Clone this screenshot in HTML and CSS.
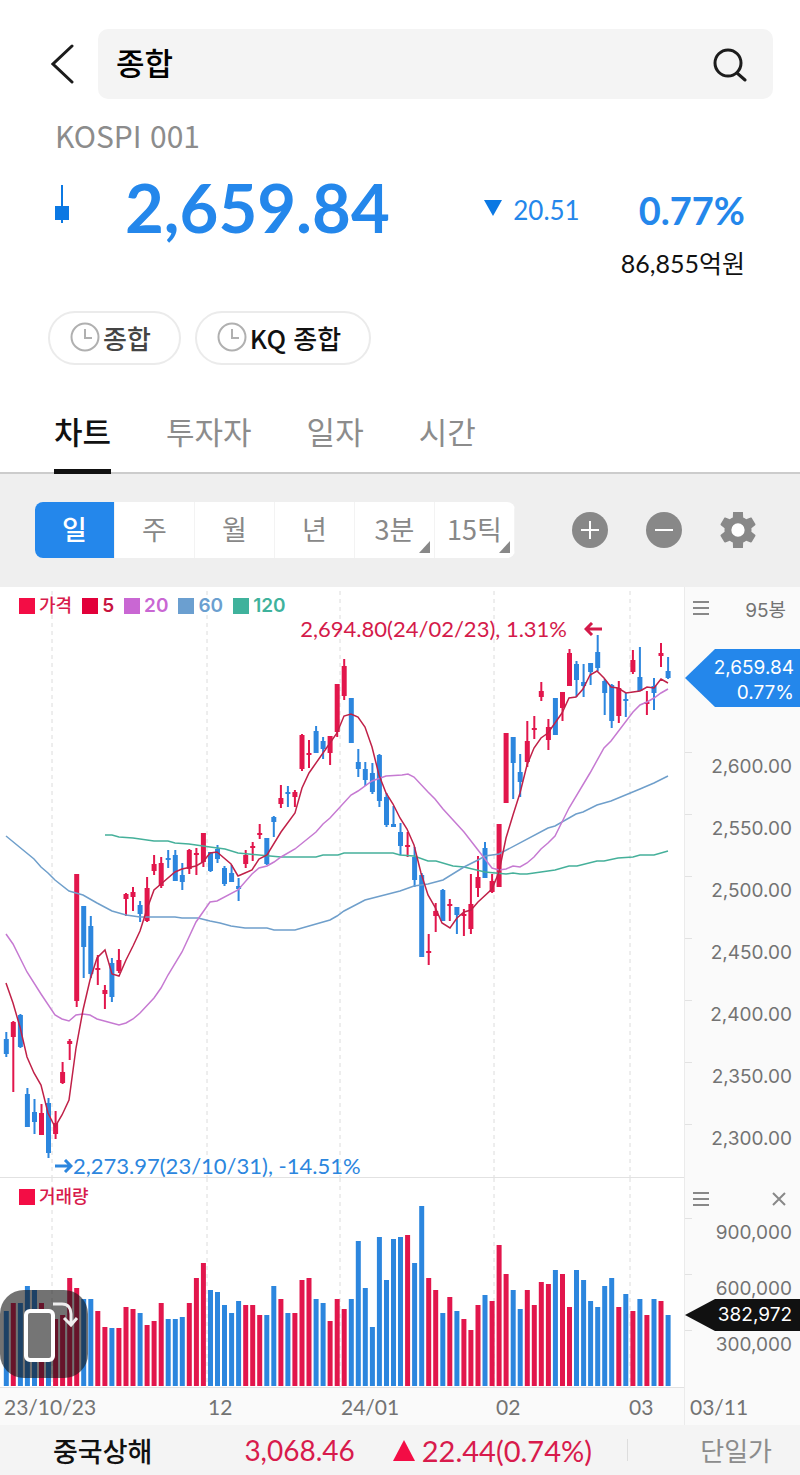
FILE: index.html
```html
<!DOCTYPE html>
<html lang="ko">
<head>
    <meta charset="UTF-8">
    <meta name="viewport" content="width=device-width, initial-scale=1.0">
    <title>종합 - KOSPI 001</title>
    <link rel="stylesheet" href="styles.css">
</head>
<body>
    <header class="top-bar">
        <button class="back" aria-label="뒤로">
            <svg width="24" height="40" viewBox="0 0 24 40"><path d="M21 2 2 20l19 18"/></svg>
        </button>
        <div class="search-box">
            <input type="text" value="종합" aria-label="종목 검색">
            <button class="search" aria-label="검색">
                <svg width="36" height="36" viewBox="0 0 36 36"><circle cx="17" cy="17" r="13"/><path d="m26 27 8 7"/></svg>
            </button>
        </div>
    </header>

    <section class="quote">
        <h1>KOSPI 001</h1>
        <div class="quote-row">
            <svg class="mini-candle" width="14" height="38" viewBox="0 0 14 38"><path d="M6 0h2v38H6zM0 21h14v14H0z"/></svg>
            <strong class="price">2,659.84</strong>
            <span class="change"><svg width="18" height="16" viewBox="0 0 18 16"><path d="M0 0h18L9 16z"/></svg>20.51</span>
            <strong class="rate">0.77%</strong>
        </div>
        <p class="amount">86,855억원</p>
    </section>

    <div class="chips">
        <button class="chip muted"><svg width="30" height="30" viewBox="0 0 30 30"><circle cx="15" cy="15" r="13.5"/><path d="M15 7v9h7"/></svg>종합</button>
        <button class="chip"><svg width="30" height="30" viewBox="0 0 30 30"><circle cx="15" cy="15" r="13.5"/><path d="M15 7v9h7"/></svg>KQ 종합</button>
    </div>

    <nav class="tabs">
        <a href="#chart" class="active">차트</a>
        <a href="#investor">투자자</a>
        <a href="#daily">일자</a>
        <a href="#time">시간</a>
    </nav>

    <div class="toolbar">
        <div class="periods">
            <button class="active">일</button>
            <button>주</button>
            <button>월</button>
            <button>년</button>
            <button class="more">3분</button>
            <button class="more">15틱</button>
        </div>
        <div class="tools">
            <button aria-label="확대"><svg width="36" height="36" viewBox="0 0 36 36"><circle cx="18" cy="18" r="18"/><path class="sign" d="M9 18h18M18 9v18"/></svg></button>
            <button aria-label="축소"><svg width="36" height="36" viewBox="0 0 36 36"><circle cx="18" cy="18" r="18"/><path class="sign" d="M9 18h18"/></svg></button>
            <button aria-label="설정"><svg width="36" height="36" viewBox="2 2 20 20"><circle class="hole" cx="12" cy="12" r="5"/><path d="M19.43 12.98c.04-.32.07-.64.07-.98s-.03-.66-.07-.98l2.11-1.65c.19-.15.24-.42.12-.64l-2-3.46c-.12-.22-.39-.3-.61-.22l-2.49 1c-.52-.4-1.08-.73-1.69-.98L14.75 2h-5.5l-.12 3.07c-.61.25-1.17.59-1.69.98l-2.49-1c-.23-.09-.49 0-.61.22l-2 3.46c-.13.22-.07.49.12.64l2.11 1.65c-.04.32-.07.65-.07.98s.03.66.07.98l-2.11 1.65c-.19.15-.24.42-.12.64l2 3.46c.12.22.39.3.61.22l2.49-1c.52.4 1.08.73 1.69.98L9.25 22h5.5l.12-3.07c.61-.25 1.17-.59 1.69-.98l2.49 1c.23.09.49 0 .61-.22l2-3.46c.12-.22.07-.49-.12-.64l-2.11-1.65zM12 15.7a3.7 3.7 0 1 1 0-7.4 3.7 3.7 0 0 1 0 7.4z"/></svg></button>
        </div>
    </div>

    <main class="chart" id="chart">
        <div class="pane price-pane">
            <svg id="price-plot" class="plot" viewBox="0 587 684 590" preserveAspectRatio="none"></svg>
            <ul class="legend">
                <li class="c-price">가격</li>
                <li class="c-ma5">5</li>
                <li class="c-ma20">20</li>
                <li class="c-ma60">60</li>
                <li class="c-ma120">120</li>
            </ul>
            <p class="mark high">2,694.80(24/02/23), 1.31%<svg width="18" height="14" viewBox="0 0 18 14"><path d="M18 7H2M8 1 2 7l6 6"/></svg></p>
            <p class="mark low"><svg width="18" height="14" viewBox="0 0 18 14"><path d="M0 7h16M10 1l6 6-6 6"/></svg>2,273.97(23/10/31), -14.51%</p>
        </div>
        <div class="axis price-axis">
            <div class="axis-head">
                <button aria-label="메뉴"><svg width="16" height="14" viewBox="0 0 16 14"><path d="M0 1h16M0 7h16M0 13h16"/></svg></button>
                <span>95봉</span>
            </div>
            <div class="tag now">2,659.84<br>0.77%</div>
            <ol>
                <li>2,600.00</li>
                <li>2,550.00</li>
                <li>2,500.00</li>
                <li>2,450.00</li>
                <li>2,400.00</li>
                <li>2,350.00</li>
                <li>2,300.00</li>
            </ol>
        </div>

        <div class="pane volume-pane">
            <svg id="volume-plot" class="plot" viewBox="0 1178 684 209" preserveAspectRatio="none"></svg>
            <ul class="legend">
                <li class="c-price">거래량</li>
            </ul>
            <button class="rotate" aria-label="가로 화면">
                <svg width="88" height="88" viewBox="0 0 88 88"><rect class="body" x="26" y="21" width="27" height="49" rx="4"/><path d="M53 14h9c6 0 9 4 9 10v9M64 28l7 7 6-7"/></svg>
            </button>
        </div>
        <div class="axis volume-axis">
            <div class="axis-head">
                <button aria-label="메뉴"><svg width="16" height="14" viewBox="0 0 16 14"><path d="M0 1h16M0 7h16M0 13h16"/></svg></button>
                <button aria-label="닫기"><svg width="14" height="14" viewBox="0 0 14 14"><path d="m1 1 12 12M13 1 1 13"/></svg></button>
            </div>
            <ol>
                <li>900,000</li>
                <li>600,000</li>
                <li>300,000</li>
            </ol>
            <div class="tag volume">382,972</div>
        </div>

        <div class="dates">
            <span>23/10/23</span>
            <span>12</span>
            <span>24/01</span>
            <span>02</span>
            <span>03</span>
        </div>
        <div class="axis last-date">03/11</div>
    </main>

    <footer class="ticker">
        <span class="name">중국상해</span>
        <span class="value">3,068.46</span>
        <span class="diff"><svg width="22" height="21" viewBox="0 0 22 21"><path d="M11 0 22 21H0z"/></svg>22.44(0.74%)</span>
        <button class="single">단일가</button>
    </footer>

    <script src="chart.js"></script>
</body>
</html>
```
FILE: styles.css
```css
* { box-sizing: border-box; }
body {
    margin: 0;
    background: #fff;
    color: #111;
    font-family: Lato, "Noto Sans CJK KR", sans-serif;
}
h1, p, ul, ol { margin: 0; padding: 0; }
ul, ol { list-style: none; }
button {
    border: none;
    padding: 0;
    background: none;
    font: inherit;
    color: inherit;
    cursor: pointer;
}
svg { display: block; }

/* header */
.top-bar {
    display: flex;
    align-items: center;
    gap: 23px;
    padding: 29px 27px 0 51px;
}
.back svg, .search svg { fill: none; stroke: #1c1c1c; stroke-width: 3; stroke-linecap: round; }
.search-box {
    flex: 1;
    display: flex;
    align-items: center;
    height: 70px;
    padding: 0 26px 0 18px;
    border-radius: 10px;
    background: #f4f4f4;
}
.search-box input {
    flex: 1;
    min-width: 0;
    border: none;
    padding: 0 0 6px;
    outline: none;
    background: none;
    color: #000;
    font: 500 31px "Noto Sans CJK KR", sans-serif;
}

/* quote */
.quote { padding: 14px 55px 0; }
.quote h1 {
    color: #8c8c8c;
    font: 400 30px/44px "Noto Sans CJK KR", sans-serif;
}
.quote-row {
    display: flex;
    align-items: center;
    height: 84px;
    margin-top: 8px;
    color: #2487eb;
}
.mini-candle { margin-bottom: 6px; fill: #0b78e3; }
.price { margin-left: 56px; font-size: 67px; line-height: 80px; }
.change, .rate { padding-top: 6px; }
.change { display: flex; align-items: center; gap: 11px; margin-left: auto; font-size: 26px; }
.change svg { margin-bottom: 4px; fill: #0b78e3; }
.rate { margin-left: 59px; font-size: 38px; }
.amount { font-size: 25px; line-height: 28px; text-align: right; }

/* recent chips */
.chips { display: flex; gap: 14px; padding: 34px 48px 0; }
.chip {
    display: flex;
    align-items: center;
    gap: 3px;
    height: 54px;
    padding: 0 28px 2px 20px;
    border: 2px solid #ebebeb;
    border-radius: 27px;
    font: 500 26px "Noto Sans CJK KR", sans-serif;
}
.chip.muted { color: #444; }
.chip svg { fill: none; stroke: #b0b0b0; stroke-width: 2; }

/* tabs */
.tabs {
    display: flex;
    gap: 55px;
    height: 109px;
    padding: 0 54px;
    border-bottom: 2px solid #ccc;
}
.tabs a {
    height: 109px;
    padding-top: 43px;
    color: #8c8c8c;
    font: 400 31px/46px "Noto Sans CJK KR", sans-serif;
    text-decoration: none;
}
.tabs a.active { border-bottom: 5px solid #111; color: #111; font-weight: 500; }

/* toolbar */
.toolbar {
    display: flex;
    align-items: center;
    justify-content: space-between;
    height: 113px;
    padding: 0 44px 2px 35px;
    background: #efefef;
}
.periods {
    display: flex;
    height: 56px;
    border-radius: 8px;
    background: #fff;
    overflow: hidden;
}
.periods button {
    position: relative;
    width: 80px;
    border-right: 1px solid #f3f3f3;
    padding-bottom: 2px;
    color: #888;
    font: 400 27px "Noto Sans CJK KR", sans-serif;
}
.periods .active { background: #2487eb; color: #fff; font-weight: 500; }
.periods .more::after {
    content: "";
    position: absolute;
    right: 4px;
    bottom: 5px;
    border-left: 11px solid transparent;
    border-bottom: 12px solid #888;
}
.tools { display: flex; gap: 38px; }
.tools svg { fill: #888; }
.tools .sign { stroke: #fff; stroke-width: 2; }
.tools .hole { fill: #fff; }

/* chart */
.chart { display: grid; grid-template-columns: 1fr 116px; }
.pane { position: relative; border-bottom: 1px solid #e2e2e2; }
.price-pane { height: 591px; }
.volume-pane { height: 210px; }
.plot { width: 100%; height: 100%; }
.grid-line { stroke: #dcdcdc; stroke-dasharray: 4 4; }
.up { fill: #e2164c; }
.down { fill: #2c86de; }
.ma { fill: none; stroke-width: 1.5; }
.ma5 { stroke: #c02148; }
.ma20 { stroke: #c67ad2; }
.ma60 { stroke: #6f9fcb; }
.ma120 { stroke: #45b09a; }

.legend {
    position: absolute;
    top: 6px;
    left: 19px;
    display: flex;
    gap: 10px;
    font: 600 19px/26px Inter, "Noto Sans CJK KR", sans-serif;
}
.legend li { display: flex; align-items: center; gap: 4px; }
.legend li::before { content: ""; width: 16px; height: 16px; background: currentColor; }
.c-price { color: #d81b4c; font-size: 18px; font-weight: 500; }
.c-price::before { color: #f30d45; }
.c-ma5 { color: #c8133f; }
.c-ma5::before { color: #e2003a; }
.c-ma20 { color: #c967d3; }
.c-ma60 { color: #6b9fd0; }
.c-ma120 { color: #3fb29c; }
.mark {
    position: absolute;
    display: flex;
    align-items: center;
    font-size: 22px;
    line-height: 28px;
    white-space: nowrap;
}
.mark svg { fill: none; stroke: currentColor; stroke-width: 3; }
.high { top: 28px; right: 82px; gap: 17px; color: #d41a4a; }
.low { bottom: -3px; left: 55px; color: #2c86de; }

.axis {
    position: relative;
    border-left: 1px solid #ebebeb;
    background: #fafafa;
    color: #737373;
    font: 400 19px Inter, "Noto Sans CJK KR", sans-serif;
}
.axis-head {
    display: flex;
    align-items: center;
    justify-content: space-between;
    height: 42px;
    padding: 0 14px 0 8px;
}
.axis-head svg { fill: none; stroke: #888; stroke-width: 2; }
.axis ol { text-align: right; }
.axis li { position: relative; height: 62px; padding-right: 8px; line-height: 30px; }
.axis li::before {
    content: "";
    position: absolute;
    top: 0;
    left: 0;
    width: 7px;
    border-top: 1px solid #e2e2e2;
}
.axis .tag { color: #fff; text-align: right; clip-path: polygon(0 50%, 30px 0, 100% 0, 100% 100%, 30px 100%); }
.axis li:last-child { height: 30px; }
.now {
    height: 58px;
    margin: 20px 0 45px;
    padding: 6px 6px 0 0;
    line-height: 25px;
    background: #2487eb;
}
.volume-axis ol { margin-top: -2px; }
.volume-axis li { height: 56px; }
.volume {
    position: absolute;
    top: 121px;
    left: 0;
    right: 0;
    padding-right: 8px;
    line-height: 32px;
    background: #111;
}
.rotate {
    position: absolute;
    left: 0;
    bottom: 9px;
    border-radius: 24px;
    background: rgba(20, 20, 20, 0.6);
}
.rotate svg { fill: none; stroke: #eee; stroke-width: 3; }
.rotate .body { fill: #757575; stroke: #fff; stroke-width: 4; }

.dates {
    display: grid;
    grid-template-columns: 204fr 133fr 155fr 133fr 55fr;
    height: 37px;
    padding-left: 4px;
    background: #fafafa;
    color: #737373;
    font-size: 21px;
    line-height: 38px;
}
.last-date { height: 37px; padding-left: 5px; font: 400 21px/38px Lato, sans-serif; }

/* bottom ticker */
.ticker {
    display: flex;
    align-items: center;
    height: 50px;
    padding: 0 28px 0 53px;
    background: #f4f4f4;
    color: #d81b4c;
    font-size: 28px;
}
.name { color: #111; font: 500 27px "Noto Sans CJK KR", sans-serif; }
.value { margin-left: 92px; }
.diff { display: flex; align-items: center; gap: 7px; margin-left: 38px; font-size: 29px; }
.diff svg { fill: #f30d45; }
.single {
    margin-left: auto;
    padding-left: 72px;
    border-left: 1px solid #ddd;
    color: #8c8c8c;
    font: 400 26px/22px "Noto Sans CJK KR", sans-serif;
}
```
FILE: chart.js
```js
// one row per day: direction, high, low, body top, body bottom, volume top
const days = [
    ['d', 1032, 1057, 1039, 1054, 1311], ['u', 1021, 1092, 1022, 1037, 1303], ['d', 1014, 1048, 1015, 1047, 1303],
    ['d', 1088, 1127, 1094, 1127, 1286], ['d', 1099, 1134, 1112, 1122, 1290], ['u', 1104, 1135, 1113, 1135, 1303],
    ['d', 1098, 1158, 1103, 1153, 1315], ['u', 1111, 1139, 1123, 1134, 1319], ['u', 1062, 1084, 1072, 1083, 1315],
    ['u', 1039, 1060, 1041, 1044, 1278], ['u', 874, 1007, 874, 1001, 1288], ['d', 906, 978, 906, 947, 1299],
    ['d', 916, 978, 926, 974, 1299], ['u', 955, 985, 968, 970, 1311], ['u', 985, 1009, 990, 994, 1327],
    ['d', 958, 1002, 963, 997, 1328], ['u', 949, 973, 960, 971, 1328], ['u', 893, 916, 894, 899, 1307],
    ['u', 887, 911, 892, 897, 1309], ['d', 901, 922, 905, 914, 1313], ['u', 877, 922, 888, 921, 1325],
    ['u', 855, 875, 864, 871, 1321], ['u', 857, 888, 863, 886, 1303], ['d', 850, 868, 858, 860, 1319],
    ['d', 850, 881, 855, 881, 1319], ['d', 863, 890, 875, 882, 1317], ['u', 849, 874, 850, 869, 1303],
    ['u', 848, 875, 853, 855, 1278], ['u', 833, 867, 833, 862, 1263], ['d', 852, 872, 852, 871, 1290],
    ['d', 845, 863, 849, 859, 1292], ['d', 866, 886, 868, 884, 1305], ['d', 865, 882, 873, 882, 1313],
    ['d', 878, 901, 886, 889, 1301], ['u', 850, 868, 855, 864, 1305], ['u', 842, 861, 846, 848, 1305],
    ['u', 824, 839, 833, 835, 1315], ['d', 838, 865, 838, 864, 1315], ['d', 816, 837, 817, 822, 1286],
    ['u', 785, 808, 798, 804, 1299], ['d', 786, 807, 792, 793, 1313], ['u', 790, 807, 792, 797, 1313],
    ['u', 734, 771, 735, 769, 1280], ['u', 740, 768, 753, 754, 1278], ['d', 726, 753, 731, 753, 1299],
    ['d', 737, 759, 741, 749, 1303], ['u', 736, 765, 736, 753, 1321], ['u', 684, 737, 684, 732, 1299],
    ['u', 659, 700, 666, 696, 1309], ['d', 698, 743, 698, 743, 1299], ['d', 749, 777, 762, 769, 1241],
    ['d', 762, 786, 769, 780, 1288], ['d', 763, 794, 773, 792, 1327], ['d', 754, 807, 755, 801, 1237],
    ['d', 793, 827, 797, 825, 1280], ['d', 806, 827, 824, 827, 1239], ['d', 823, 855, 832, 846, 1237],
    ['u', 832, 857, 845, 847, 1235], ['d', 847, 887, 857, 880, 1263], ['d', 873, 957, 875, 957, 1206],
    ['u', 934, 965, 951, 953, 1278], ['u', 903, 932, 911, 916, 1290], ['d', 889, 921, 890, 921, 1313],
    ['u', 899, 921, 904, 906, 1297], ['d', 907, 934, 907, 915, 1311], ['u', 909, 936, 914, 916, 1319],
    ['u', 874, 934, 904, 929, 1330], ['u', 856, 897, 877, 888, 1305], ['d', 842, 878, 848, 878, 1295],
    ['u', 874, 893, 881, 892, 1301], ['u', 824, 887, 824, 887, 1245], ['u', 733, 803, 733, 803, 1274],
    ['d', 737, 799, 737, 763, 1290], ['d', 754, 797, 772, 782, 1309], ['u', 721, 767, 741, 762, 1290],
    ['u', 716, 739, 728, 729, 1305], ['u', 682, 701, 691, 697, 1282], ['u', 719, 750, 727, 740, 1284],
    ['d', 698, 735, 698, 735, 1270], ['u', 692, 721, 692, 708, 1274], ['u', 649, 686, 653, 686, 1307],
    ['d', 661, 697, 664, 680, 1270], ['d', 664, 697, 682, 686, 1280], ['d', 663, 685, 663, 672, 1301],
    ['d', 635, 671, 652, 668, 1307], ['d', 679, 715, 681, 693, 1286], ['d', 684, 728, 685, 721, 1278],
    ['u', 681, 723, 688, 716, 1307], ['d', 693, 717, 699, 701, 1294], ['u', 650, 674, 660, 672, 1311],
    ['d', 647, 691, 677, 691, 1299], ['u', 691, 715, 702, 704, 1315], ['d', 678, 710, 686, 693, 1299],
    ['u', 643, 667, 653, 656, 1301], ['d', 657, 679, 671, 678, 1315]
];

const averages = {
    ma120: '105,835 112,835 119,837 133,838 154,841 168,841 175,843 189,844 210,847 225,849 238,853 259,855 281,857 316,857 323,855 338,855 344,853 393,853 400,855 414,856 428,861 436,861 453,866 464,867 485,872 506,874 513,873 520,874 527,874 541,872 555,870 569,866 577,866 597,861 604,861 618,858 633,857 640,855 654,855 668,851',
    ma60: '6,836 34,859 41,867 48,873 55,880 69,891 76,893 83,895 97,903 112,911 126,915 140,917 175,917 182,918 198,918 210,921 220,923 231,926 245,928 267,928 274,930 295,930 309,926 330,920 337,916 344,911 365,900 400,891 414,886 428,884 443,880 464,867 478,860 485,856 499,854 548,828 555,826 576,814 583,812 597,805 611,801 640,789 654,783 668,776',
    ma20: '6,934 13,944 27,972 41,994 55,1015 62,1019 69,1021 76,1015 83,1014 90,1015 97,1019 119,1025 126,1023 133,1019 140,1013 154,998 161,988 168,975 182,952 196,922 210,902 217,901 238,890 252,874 259,868 267,866 274,862 281,857 295,849 316,832 323,824 330,818 351,795 358,791 372,781 386,776 402,775 408,774 414,777 428,792 435,799 443,809 464,832 492,868 499,870 506,869 513,866 520,867 527,863 534,857 541,849 548,843 555,836 562,822 569,808 590,773 604,748 611,741 633,712 640,705 647,702 654,698 661,693 668,689',
    ma5: '6,983 13,1003 20,1027 27,1057 34,1073 41,1085 48,1113 55,1127 62,1115 69,1100 76,1048 83,1010 90,980 97,958 105,950 112,974 119,976 126,960 133,946 140,931 147,909 154,890 161,884 175,872 182,869 196,866 203,862 210,853 217,852 231,864 238,876 245,873 252,870 259,859 267,855 281,832 295,813 302,788 309,773 323,753 337,733 344,716 351,714 358,717 365,727 372,747 379,775 386,793 393,804 400,818 407,829 414,845 421,873 428,895 435,907 442,923 450,928 457,918 464,912 471,910 478,902 492,889 499,872 506,838 513,815 520,793 527,765 534,748 541,738 548,733 555,723 562,713 569,698 576,697 583,689 590,675 597,671 604,678 611,687 618,688 626,693 633,692 640,691 647,687 654,688 661,679 668,683'
};

const months = [52, 207, 340, 494, 630];
const step = 7.04;
const first = 6.3;
const baseline = 1386;

function rect(cls, x, y, w, h) {
    return `<rect class="${cls}" x="${x.toFixed(1)}" y="${y}" width="${w}" height="${Math.max(h, 2)}"/>`;
}

function gridLines(top, bottom) {
    return months.map(x => `<line class="grid-line" x1="${x}" y1="${top}" x2="${x}" y2="${bottom}"/>`).join('');
}

let price = gridLines(591, 1177);
let volume = gridLines(1178, 1388);

days.forEach(([dir, high, low, top, bottom, vol], i) => {
    const x = first + i * step;
    const cls = dir === 'u' ? 'up' : 'down';
    price += rect(cls, x - 1, high, 2, low - high);
    price += rect(cls, x - 2.5, top, 5, bottom - top);
    volume += rect(cls, x - 2.5, vol, 5, baseline - vol);
});

for (const name in averages) {
    price += `<polyline class="ma ${name}" points="${averages[name]}"/>`;
}

document.getElementById('price-plot').innerHTML = price;
document.getElementById('volume-plot').innerHTML = volume;
```
